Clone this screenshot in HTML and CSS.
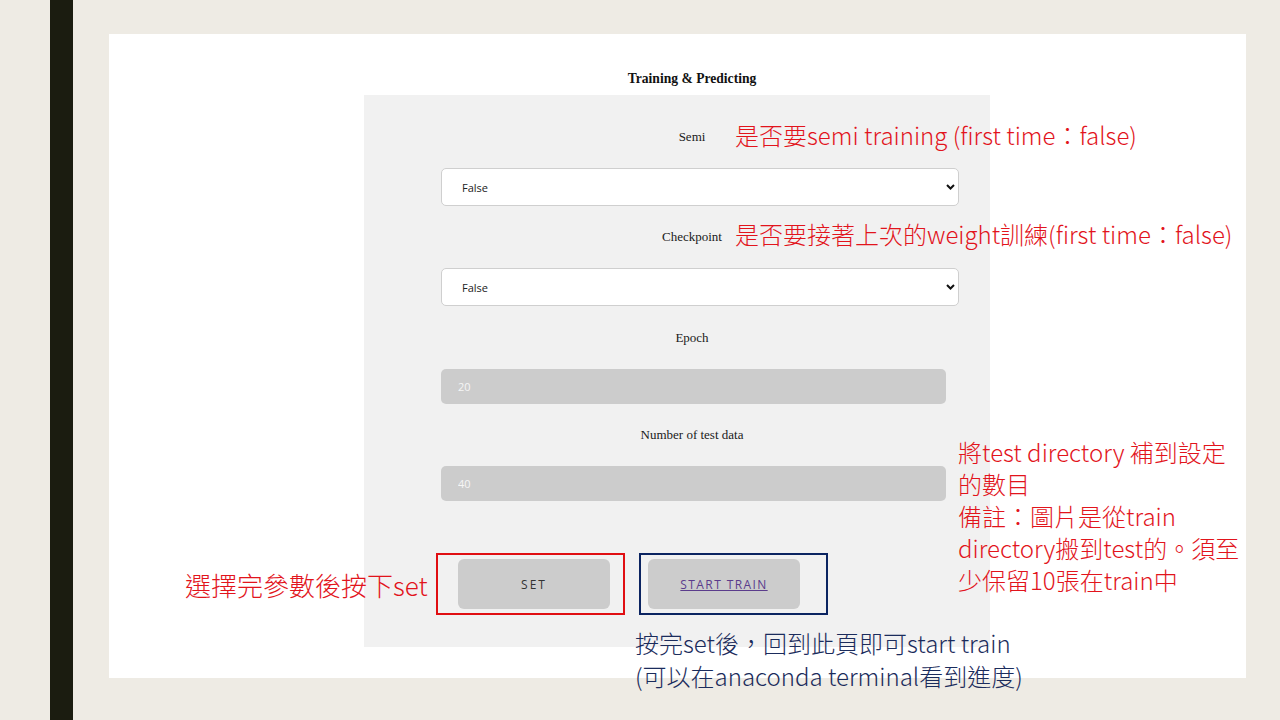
FILE: index.html
```html
<!DOCTYPE html>
<html lang="zh-Hant">
<head>
<meta charset="utf-8">
<title>Training &amp; Predicting</title>
<link rel="stylesheet" href="styles.css">
</head>
<body>
<div class="slide">
  <div class="bar"></div>
  <div class="page">
    <h1 class="title">Training &amp; Predicting</h1>
    <div class="panel">
      <form class="form">
        <label class="label">Semi</label>
        <div class="select-wrap">
          <select class="select"><option>False</option><option>True</option></select>
          <svg class="chev" width="9" height="6" viewBox="0 0 9 6"><path d="M1 1 L4.5 4.5 L8 1" fill="none" stroke="#111" stroke-width="2"/></svg>
        </div>
        <label class="label">Checkpoint</label>
        <div class="select-wrap">
          <select class="select"><option>False</option><option>True</option></select>
          <svg class="chev" width="9" height="6" viewBox="0 0 9 6"><path d="M1 1 L4.5 4.5 L8 1" fill="none" stroke="#111" stroke-width="2"/></svg>
        </div>
        <label class="label label-shift">Epoch</label>
        <input class="field" type="text" value="20" readonly>
        <label class="label">Number of test data</label>
        <input class="field" type="text" value="40" readonly>
        <div class="buttons">
          <button class="btn" type="button">SET</button>
          <a class="btn btn-link" href="#">START TRAIN</a>
        </div>
      </form>
    </div>
  </div>

  <div class="note note-red note-semi">是否要semi training (first time：false)</div>
  <div class="note note-red note-ckpt">是否要接著上次的weight訓練(first time：false)</div>
  <div class="note note-red note-test">將test directory 補到設定<br>的數目<br>備註：圖片是從train<br>directory搬到test的。須至<br>少保留10張在train中</div>
  <div class="note note-red note-set">選擇完參數後按下set</div>
  <div class="note note-navy note-train">按完set後，回到此頁即可start train<br>(可以在anaconda terminal看到進度)</div>

  <div class="box box-red"></div>
  <div class="box box-navy"></div>
</div>
</body>
</html>
```

FILE: styles.css
```css
* { box-sizing: border-box; }

html, body {
  margin: 0;
  padding: 0;
}

body {
  background: #eeebe4;
  width: 1280px;
  height: 720px;
  overflow: hidden;
}

.slide {
  position: relative;
  display: flex;
  width: 1280px;
  height: 720px;
}

.bar {
  margin-left: 50px;
  width: 23px;
  height: 720px;
  background: #1b1c10;
  flex: none;
}

.page {
  margin-left: 36px;
  margin-top: 34px;
  width: 1137px;
  height: 644px;
  background: #ffffff;
  flex: none;
}

.title {
  margin: 0 0 6px 255px;
  width: 626px;
  padding: 35px 0 0 30px;
  font-family: "Liberation Serif", serif;
  font-weight: bold;
  font-size: 13.6px;
  line-height: 20px;
  color: #111;
  text-align: center;
}

.panel {
  margin-left: 255px;
  width: 626px;
  height: 552px;
  background: #f1f1f1;
  padding: 32px 0 0 77px;
}

.form {
  width: 502px;
  display: flex;
  flex-direction: column;
  gap: 21px;
  margin: 0;
}

.label {
  display: block;
  height: 20px;
  font-family: "Liberation Serif", serif;
  font-size: 13px;
  line-height: 20px;
  color: #1a1a1a;
  text-align: center;
}

.label-shift {
  margin-top: 1px;
}

.select-wrap {
  position: relative;
  width: 518px;
  height: 38px;
  flex: none;
}

.select {
  appearance: none;
  -webkit-appearance: none;
  width: 100%;
  height: 100%;
  border: 1px solid #cfcfcf;
  border-radius: 5px;
  background: #ffffff;
  padding: 0 0 0 20px;
  font-family: "Open Sans", sans-serif;
  font-size: 11px;
  color: #222;
  margin: 0;
}

.chev {
  position: absolute;
  right: 4px;
  top: 16px;
}

.field {
  width: 505px;
  height: 35px;
  flex: none;
  border: none;
  border-radius: 5px;
  background: #cccccc;
  padding: 0 0 0 17px;
  margin: 0;
  font-family: "Open Sans", sans-serif;
  font-size: 11px;
  color: #f6f6f6;
  outline: none;
}

.buttons {
  display: flex;
  gap: 38px;
  margin-top: 37px;
  padding-left: 17px;
}

.btn {
  width: 152px;
  height: 50px;
  border: none;
  border-radius: 6px;
  background: #cccccc;
  display: flex;
  align-items: center;
  justify-content: center;
  font-family: "Open Sans", sans-serif;
  font-size: 12px;
  letter-spacing: 2px;
  color: #333;
  padding: 0;
  text-decoration: none;
}

.btn-link {
  color: #5b3c8c;
  text-decoration: underline;
  letter-spacing: 1.4px;
}

.note {
  position: absolute;
  font-family: "Noto Sans CJK TC", "Noto Sans CJK SC", sans-serif;
  font-weight: 300;
  font-size: 24px;
  line-height: 32px;
  white-space: nowrap;
}

.note-red { color: #e2141c; }
.note-navy { color: #1b2c5c; line-height: 33px; }

.note-semi { left: 735px; top: 119px; }
.note-ckpt { left: 735px; top: 218px; }
.note-test { left: 958px; top: 436px; }
.note-set  { left: 185px; top: 569px; font-size: 26px; }
.note-train { left: 635px; top: 626px; }

.box {
  position: absolute;
  top: 553px;
  width: 189px;
  height: 62px;
  border: 2px solid;
}

.box-red { left: 436px; border-color: #e00e12; }
.box-navy { left: 639px; border-color: #0b2461; }
```
